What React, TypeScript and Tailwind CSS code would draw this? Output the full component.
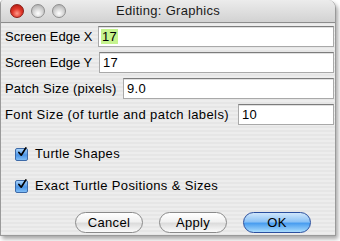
import { useState } from "react";

const font = { fontFamily: '"Lucida Grande", "Liberation Sans", Arial, sans-serif' };

function Light({ color }: { color: "red" | "grey" }) {
  return (
    <span
      className={`block h-[14px] w-[14px] rounded-full border ${
        color === "red"
          ? "border-[#8a1c14] bg-[radial-gradient(circle_at_50%_70%,#ff9a8a_0%,#e0372a_45%,#a8150d_100%)]"
          : "border-[#8e8e8e] bg-[radial-gradient(circle_at_50%_70%,#ffffff_0%,#d6d6d6_45%,#a4a4a4_100%)]"
      }`}
    />
  );
}

function Field({ label, value, width, highlight }: { label: string; value: string; width: string; highlight?: boolean }) {
  return (
    <div className="flex h-[21px] items-center">
      <span className={`shrink-0 whitespace-nowrap text-[13px] leading-none text-black ${width}`}>{label}</span>
      <div className="flex h-full flex-1 items-center border border-[#a9a9a9] border-t-[#7c7c7c] bg-white pl-[2px] shadow-[inset_0_1px_0_#e0e0e0]">
        <span className={`px-[1px] text-[13px] leading-[15px] tracking-[0.3px] text-black ${highlight ? "bg-[#c6f48f]" : ""}`}>
          {value}
        </span>
      </div>
    </div>
  );
}

function Check({ label }: { label: string }) {
  const [on, setOn] = useState(true);
  return (
    <label className="flex h-[20px] items-center gap-[7px] pl-[14px] text-[13px] tracking-[0.35px] text-black">
      <button
        type="button"
        onClick={() => setOn((v) => !v)}
        className="flex h-[13px] w-[13px] items-center justify-center rounded-[2px] border border-[#3d6aa8] bg-[linear-gradient(#a9d3fb,#4c95e6_55%,#7fbdf6)]"
      >
        {on && (
          <svg width="13" height="13" viewBox="0 0 13 13" className="-mt-[3px] ml-[1px]">
            <path d="M2.5 6.5 L5.5 10 L11.5 0.5" fill="none" stroke="#000" strokeWidth="2.2" strokeLinecap="round" strokeLinejoin="round" />
          </svg>
        )}
      </button>
      <span>{label}</span>
    </label>
  );
}

function Btn({ label, primary }: { label: string; primary?: boolean }) {
  return (
    <button
      type="button"
      className={`h-[21px] w-[68px] rounded-full border text-[13px] leading-none tracking-[0.3px] text-black ${
        primary
          ? "border-[#2a4f9e] bg-[linear-gradient(#cfe6fb,#8dc3f6_45%,#4a9ef0_55%,#a9dcfd)]"
          : "border-[#8a8a8a] bg-[linear-gradient(#ffffff,#f1f1f1_45%,#dcdcdc_55%,#fbfbfb)]"
      }`}
    >
      {label}
    </button>
  );
}

export default function App() {
  return (
    <div className="h-[241px] w-[340px] bg-white" style={font}>
      <div className="flex h-[236px] w-[336px] flex-col overflow-hidden rounded-tr-[8px] rounded-tl-[4px] border-l border-r border-b border-[#9a9a9a] bg-[repeating-linear-gradient(#ededed_0px,#ededed_2px,#e6e6e6_2px,#e6e6e6_4px)] shadow-[2px_3px_4px_rgba(0,0,0,0.35)]">
        <div className="relative flex h-[23px] shrink-0 items-center border-b border-[#8c8c8c] bg-[linear-gradient(#ececec,#d2d2d2)] pl-[9px]">
          <div className="flex gap-[7px]">
            <Light color="red" />
            <Light color="grey" />
            <Light color="grey" />
          </div>
          <span className="absolute inset-x-0 text-center text-[13px] tracking-[0.3px] text-[#1a1a1a]">Editing: Graphics</span>
        </div>
        <div className="flex flex-col gap-[5px] pl-[4px] pr-[1px] pt-[3px]">
          <Field label="Screen Edge X" value="17" width="w-[93px]" highlight />
          <Field label="Screen Edge Y" value="17" width="w-[94px]" />
          <Field label="Patch Size (pixels)" value="9.0" width="w-[118px] tracking-[0.2px]" />
          <Field label="Font Size (of turtle and patch labels)" value="10" width="w-[233px] tracking-[0.4px]" />
        </div>
        <div className="flex flex-col gap-[12px] pt-[19px]">
          <Check label="Turtle Shapes" />
          <Check label="Exact Turtle Positions & Sizes" />
        </div>
        <div className="flex gap-[16px] pl-[74px] pt-[16px]">
          <Btn label="Cancel" />
          <Btn label="Apply" />
          <Btn label="OK" primary />
        </div>
      </div>
    </div>
  );
}
